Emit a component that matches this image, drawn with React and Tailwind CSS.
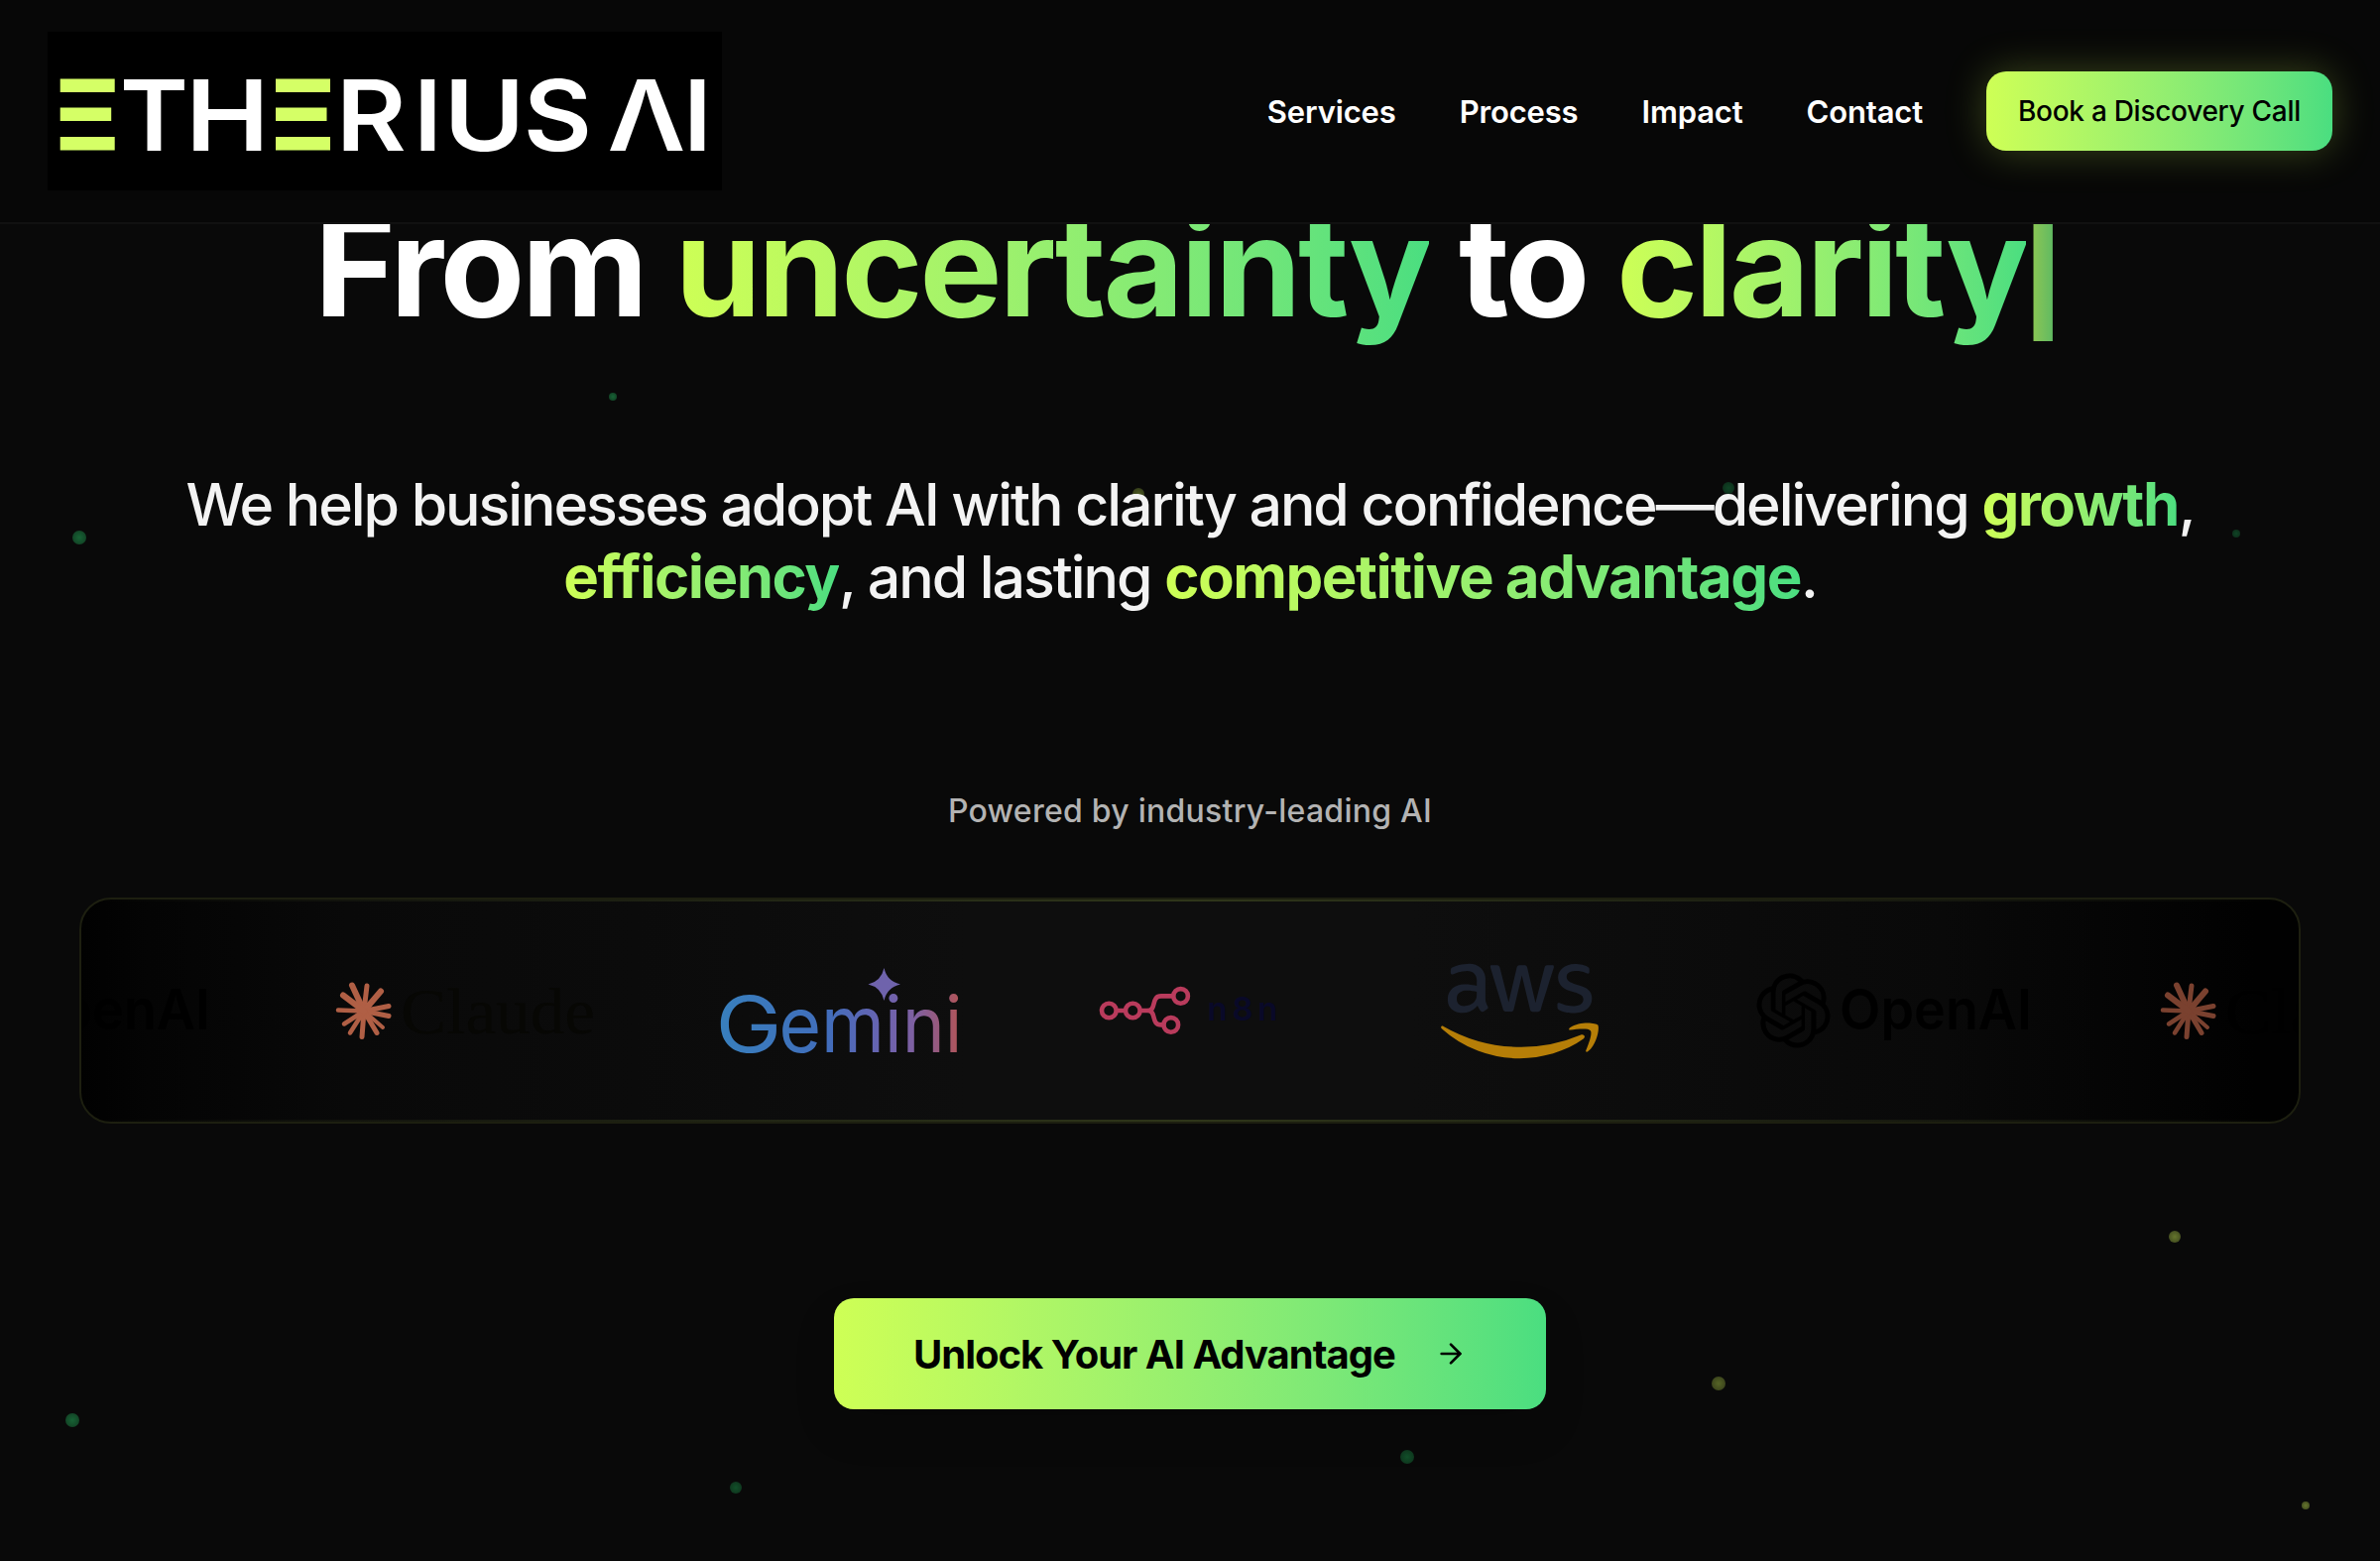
import React from "react";
import { SiOpenai } from "react-icons/si";
import { FaAws } from "react-icons/fa";
import { ArrowRight } from "lucide-react";

const GRAD = "bg-gradient-to-r from-[#ceff55] to-[#4ade80]";
const GRAD_TEXT = "bg-gradient-to-r from-[#ceff55] to-[#4ade80] bg-clip-text text-transparent";

const particles = [
  { x: 617.5, y: 400, r: 4, c: "#176335" },
  { x: 80, y: 542, r: 7, c: "#176335" },
  { x: 1148, y: 498, r: 6, c: "#4d5a22" },
  { x: 1743, y: 492, r: 6, c: "#0f4425" },
  { x: 2255, y: 538, r: 4, c: "#0f4425" },
  { x: 2192.5, y: 1246.5, r: 6, c: "#65752d" },
  { x: 1733, y: 1395, r: 7, c: "#566426" },
  { x: 73, y: 1432, r: 7, c: "#176335" },
  { x: 742, y: 1500, r: 6, c: "#12502a" },
  { x: 1419, y: 1468.5, r: 7, c: "#12502a" },
  { x: 2325, y: 1518, r: 4, c: "#65752d" },
];

// glyph, left edge, ink width, left bearing and ink share of the advance
const brandGlyphs = [
  ["T", 125, 61, 0.06, 0.88],
  ["H", 198, 63, 0.13, 0.745],
  ["R", 348, 60, 0.13, 0.845],
  ["I", 424, 15, 0.24, 0.52],
  ["U", 457, 63, 0.115, 0.77],
  ["S", 532, 61, 0.06, 0.88],
  ["Λ", 615, 74, 0.03, 0.94],
  ["I", 696, 15, 0.24, 0.52],
];

function Brand() {
  return (
    <svg width="680" height="160" viewBox="48 32 680 160" className="shrink-0 bg-black" aria-label="Etherius AI">
      {[60.7, 278].map((x) => (
        <g key={x} fill="#d5ff66">
          <rect x={x} y="79.5" width="55" height="13.5" />
          <rect x={x} y="108.5" width="51.5" height="13.5" />
          <rect x={x} y="138" width="55" height="13.5" />
        </g>
      ))}
      {brandGlyphs.map(([g, x, w, left, ink], i) => (
        <text
          key={i}
          x={x - (w / ink) * left}
          y="151.5"
          textLength={w / ink}
          lengthAdjust="spacingAndGlyphs"
          fill="#fff"
          fontFamily="Inter, sans-serif"
          fontWeight="600"
          fontSize="99"
        >
          {g}
        </text>
      ))}
    </svg>
  );
}

function OpenAI() {
  return (
    <div className="flex h-20 w-[276px] shrink-0 items-center text-black">
      <SiOpenai size={76} />
      <svg width="192" height="80" className="ml-[9px] shrink-0 overflow-visible">
        <text x="0" y="58.5" textLength="194" lengthAdjust="spacingAndGlyphs" fill="currentColor" fontFamily="Inter, sans-serif" fontWeight="600" fontSize="56">OpenAI</text>
      </svg>
    </div>
  );
}

const rays = [
  [-12, -26, 6], [3, -25.5, 5], [17, -20, 6], [25, -5, 5], [25, 5, 5], [19, 16.5, 4],
  [13, 22, 5], [-2, 26, 5], [-14, 22, 4.5], [-20, 13, 4.5], [-26, -1, 4.5], [-21, -16, 6],
];

function Claude({ sun, text }) {
  return (
    <svg width="262" height="80" viewBox="338 979 262 80" className="shrink-0 overflow-visible">
      <g stroke={sun} fill={sun} strokeLinecap="round">
        <circle cx="367" cy="1019.5" r="7" stroke="none" />
        {rays.map(([x, y, w], i) => (
          <line key={i} x1="367" y1="1019.5" x2={367 + x} y2={1019.5 + y} strokeWidth={w} />
        ))}
      </g>
      <text x="404" y="1041.5" textLength="196" lengthAdjust="spacingAndGlyphs" fill={text} fontFamily="Liberation Serif, serif" fontSize="66">Claude</text>
    </svg>
  );
}

function Gemini() {
  return (
    <svg width="242" height="96" viewBox="726 971 242 96" className="shrink-0 overflow-visible">
      <defs>
        <linearGradient id="gem" gradientUnits="userSpaceOnUse" x1="727" y1="0" x2="967" y2="0">
          <stop offset="0" stopColor="#387fbd" />
          <stop offset="0.45" stopColor="#416dbb" />
          <stop offset="0.68" stopColor="#6a63b0" />
          <stop offset="0.82" stopColor="#8060a0" />
          <stop offset="0.96" stopColor="#a3566a" />
          <stop offset="1" stopColor="#b3565a" />
        </linearGradient>
      </defs>
      <text y="1061" fill="url(#gem)" fontFamily="Inter, sans-serif" fontSize="78">
        <tspan x="721.5" textLength="67" lengthAdjust="spacingAndGlyphs">G</tspan>
        <tspan x="785.5" textLength="185" lengthAdjust="spacingAndGlyphs">emini</tspan>
      </text>
      <path d="M891.5 976 Q894.5 989.5 908 992.5 Q894.5 995.5 891.5 1009 Q888.5 995.5 875.5 992.5 Q888.5 989.5 891.5 976Z" fill="#6f63ac" />
    </svg>
  );
}

function N8n() {
  return (
    <svg width="180" height="60" viewBox="1108 987 180 60" className="shrink-0 overflow-visible">
      <g fill="none" stroke="#b93b5c" strokeWidth="4.6">
        <circle cx="1118.3" cy="1017" r="7.3" />
        <circle cx="1142.3" cy="1017" r="7.3" />
        <circle cx="1190.6" cy="1002.4" r="7.3" />
        <circle cx="1180.8" cy="1031.4" r="7.3" />
        <path d="M1125.600 1017H1135M1149.600 1017H1157C1167 1017 1160 1002.400 1171 1002.400H1183M1157 1017C1167 1017 1160 1031.400 1171 1031.400H1173.500" />
      </g>
      <text x="1217.5" y="1026.5" textLength="71" lengthAdjust="spacing" fill="#090928" fontFamily="Inter, sans-serif" fontWeight="600" fontSize="33">n8n</text>
    </svg>
  );
}

function Aws() {
  return (
    <div className="flex h-[127px] w-[159px] shrink-0">
      <svg width="0" height="0">
        <defs>
          <linearGradient id="aws" gradientUnits="userSpaceOnUse" x1="0" y1="0" x2="0" y2="512">
            <stop offset="0.55" stopColor="#1c222f" />
            <stop offset="0.55" stopColor="#b67e07" />
          </linearGradient>
        </defs>
      </svg>
      <FaAws fill="url(#aws)" className="h-[127px] w-[159px] shrink-0" />
    </div>
  );
}

export default function App() {
  return (
    <div className="relative flex h-[1574px] w-[2400px] flex-col overflow-hidden bg-[#090909] font-['Inter',sans-serif] text-white">
      {particles.map((p, i) => (
        <span
          key={i}
          className="absolute rounded-full"
          style={{ left: p.x - p.r, top: p.y - p.r, width: 2 * p.r, height: 2 * p.r, background: `radial-gradient(circle, ${p.c} 0%, ${p.c}88 100%)` }}
        />
      ))}

      <header className="relative z-10 flex h-[226px] shrink-0 items-center justify-between border-b-2 border-[#111111] bg-[#070707] px-12">
        <Brand />
        <nav className="flex items-center gap-16 text-[31px] font-[560] leading-none tracking-[-0.005em]">
          <a className="pt-px">Services</a>
          <a className="pt-px">Process</a>
          <a className="pt-px">Impact</a>
          <a className="pt-px">Contact</a>
          <button className={`flex h-20 w-[349px] items-center justify-center rounded-[20px] text-[28px] font-medium tracking-[-0.01em] text-black shadow-[0_0_40px_rgba(206,255,85,0.25)] ${GRAD}`}>
            Book a Discovery Call
          </button>
        </nav>
      </header>

      <main className="relative flex flex-col items-center">
        <h1 className="-mt-12 whitespace-nowrap text-[140px] font-bold leading-[180px] tracking-[-0.0235em]">
          From <span className={`inline-block ${GRAD_TEXT}`}>uncertainty</span> to{" "}
          <span className={`inline-block ${GRAD_TEXT}`}>clarity</span>
          <span className={`-ml-[9px] inline-block -translate-y-2 opacity-80 ${GRAD_TEXT}`}>|</span>
        </h1>

        <p className="mt-[114px] whitespace-nowrap text-center text-[59px] font-[540] leading-[72px] tracking-[-0.035em] text-[#f3f3f3]">
          We help businesses adopt AI with clarity and confidence—delivering{" "}
          <span className={`text-[60px] font-bold tracking-[-0.025em] ${GRAD_TEXT}`}>growth</span>,
          <br />
          <span className={`text-[60px] font-bold tracking-[-0.025em] ${GRAD_TEXT}`}>efficiency</span>, and lasting{" "}
          <span className={`text-[60px] font-bold tracking-[-0.025em] ${GRAD_TEXT}`}>competitive advantage</span>.
        </p>

        <p className="mt-[176px] text-[32px] font-medium leading-[48px] tracking-[0.008em] text-[#b3b3b3]">Powered by industry-leading AI</p>

        <section className="mt-[63px] flex h-[228px] w-[2240px] flex-col justify-between overflow-hidden rounded-[32px] border-2 border-[#1d1f10] bg-[linear-gradient(90deg,#010101_0%,#040404_3%,#060606_7%,#090909_12%,#0b0b0b_25%,#0e0e0e_40%,#0e0e0e_60%,#0b0b0b_75%,#090909_84%,#050505_91%,#010101_98%)]">
          <div className="h-0.5 bg-gradient-to-r from-transparent via-[#2f361a] to-transparent" />
          <div className="-ml-[148px] flex w-[2600px] items-center">
            <OpenAI />
            <div className="ml-[128px] flex"><Claude sun="#b05f45" text="#070704" /></div>
            <div className="ml-[126px] flex"><Gemini /></div>
            <div className="ml-[140px] flex"><N8n /></div>
            <div className="ml-[165px] flex"><Aws /></div>
            <div className="ml-[159px] flex"><OpenAI /></div>
            <div className="ml-[131px] flex"><Claude sun="#7a412f" text="#000000" /></div>
          </div>
          <div className="h-0.5 bg-gradient-to-r from-transparent via-[#2f361a] to-transparent" />
        </section>

        <button className={`mt-44 flex h-28 w-[718px] items-center justify-between rounded-[20px] px-20 text-black shadow-[0_20px_40px_rgba(0,0,0,0.15)] ${GRAD}`}>
          <span className="whitespace-nowrap pt-0.5 text-[40px] font-bold tracking-[-0.025em]">Unlock Your AI Advantage</span>
          <ArrowRight size={32} strokeWidth={2} />
        </button>
      </main>
    </div>
  );
}
